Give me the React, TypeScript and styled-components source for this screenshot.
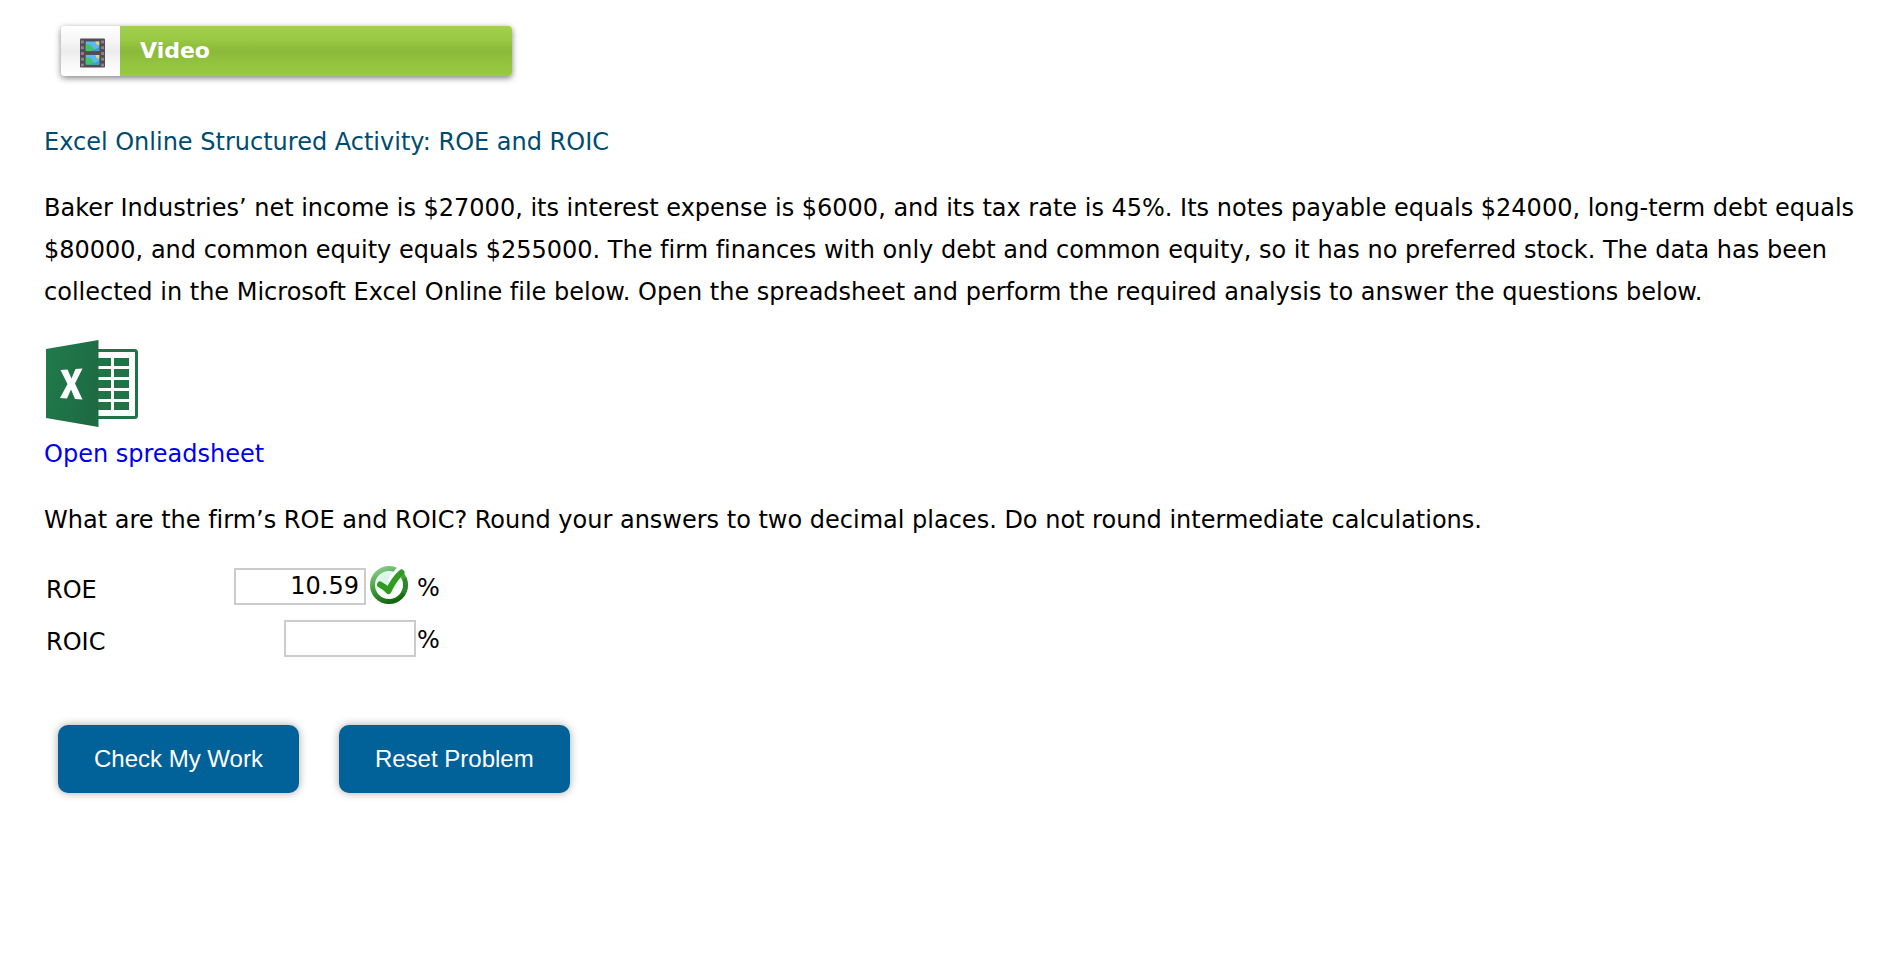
import React, { useState } from "react";
import styled, { createGlobalStyle } from "styled-components";

const GlobalStyle = createGlobalStyle`
  *, *::before, *::after { box-sizing: border-box; }
  body {
    margin: 0;
    background: #fff;
    color: #000;
    font-family: Verdana, "DejaVu Sans", sans-serif;
    font-size: 24px;
    line-height: 42px;
    font-variant-ligatures: none;
  }
`;

const Page = styled.main`
  padding: 26px 20px 40px 44px;
`;

const VideoLink = styled.a`
  display: flex;
  width: 451px;
  max-width: 100%;
  height: 50px;
  margin-left: 17px;
  border-radius: 4px;
  overflow: hidden;
  box-shadow: 0 2px 6px rgba(0, 0, 0, 0.5);
  color: #fff;
  text-decoration: none;
`;

const VideoIcon = styled.span`
  display: flex;
  align-items: center;
  justify-content: center;
  flex: 0 0 59px;
  padding: 4px 0 0 3px;
  background: linear-gradient(#fff 0%, #f6f6f6 30%, #ececec 50%, #f8f8f8 75%, #fff 100%);
`;

const VideoLabel = styled.span`
  flex: 1;
  padding-left: 20px;
  font-size: 22px;
  font-weight: bold;
  line-height: 50px;
  background: linear-gradient(#a3d04f 0%, #9aca45 25%, #8bb93a 50%, #93c43d 75%, #98cb40 100%);
`;

const Title = styled.h1`
  margin: 45px 0 24px;
  font-size: 24px;
  font-weight: normal;
  color: #004b70;
`;

const Text = styled.p`
  margin: 0 0 24px;
`;

const SheetLink = styled.a`
  display: inline-flex;
  flex-direction: column;
  gap: 6px;
  margin: 3px 0 24px;
  color: #00e;
  text-decoration: none;
`;

const ExcelIcon = styled.svg`
  display: block;
  margin-left: 2px;
`;

const Answers = styled.div`
  display: flex;
  flex-direction: column;
  width: 397px;
  gap: 10px;
  margin-left: 2px;
`;

const AnswerRow = styled.div`
  display: flex;
  align-items: center;
  height: 42px;
`;

const AnswerLabel = styled.label`
  flex: 1;
  padding-top: 8px;
`;

const AnswerInput = styled.input`
  width: 132px;
  height: 37px;
  padding: 0 5px;
  border: 2px solid #ccc;
  border-radius: 0;
  background: #fff;
  color: #000;
  font: inherit;
  line-height: 33px;
  text-align: right;
`;

const Mark = styled.svg`
  margin: 0 8px 3px 4px;
`;

const Unit = styled.span`
  width: 27px;
  padding: 4px 0 0 1px;
`;

const Actions = styled.div`
  display: flex;
  flex-wrap: wrap;
  gap: 40px;
  margin: 66px 0 0 14px;
`;

const ActionButton = styled.button`
  height: 68px;
  padding: 0 36px;
  border: 0;
  border-radius: 10px;
  background: #006298;
  box-shadow: 0 0 8px rgba(0, 0, 0, 0.35);
  color: #fff;
  font-family: Arial, "Liberation Sans", sans-serif;
  font-size: 24px;
  cursor: pointer;
`;

const perforations = [1, 7, 13, 19, 25];

function FilmStrip() {
  return (
    <svg width="25" height="30" viewBox="0 0 26 30" aria-hidden="true">
      <rect width="26" height="30" rx="1" fill="#504c52" />
      {[3, 17].map((y) => (
        <g key={y}>
          <rect x="6" y={y} width="14" height="10" fill="#5cb8ee" />
          <path d={`M6 ${y + 3}q5 -1 7 3t7 2v2H6z`} fill="#3fc565" />
          <path d={`M12 ${y + 10}l8 -4v4z`} fill="#3c9bdc" />
          <path d={`M16 ${y}h4v4q-3 0 -4 -4z`} fill="#f0d36a" />
        </g>
      ))}
      {perforations.map((y) => (
        <g key={y} fill="#8d8490">
          <rect x="1" y={y + 1} width="3" height="3" />
          <rect x="22" y={y + 1} width="3" height="3" />
        </g>
      ))}
    </svg>
  );
}

function Spreadsheet() {
  return (
    <ExcelIcon width="92" height="87" viewBox="0 0 92 87" aria-hidden="true">
      <defs>
        <linearGradient id="cover" x2="1" y2="0.4">
          <stop offset="0" stopColor="#207b4c" />
          <stop offset="1" stopColor="#1e6b43" />
        </linearGradient>
      </defs>
      <rect x="40" y="10.500" width="50.500" height="67" rx="2" fill="#fff" stroke="#207347" strokeWidth="3" />
      {[18, 29, 40, 51, 62].map((y) => (
        <g key={y} fill="#207347">
          <rect x="50" y={y} width="15" height="8" />
          <rect x="68" y={y} width="15" height="8" />
        </g>
      ))}
      <path d="M0 9L52.500 0V87L0 78z" fill="url(#cover)" />
      <path d="M14.500 30L21.500 29.500L25.500 38.500L29.500 29L36.500 28.500L29 43.500L36.500 59.500L29 59L25 49.500L21 58.500L14 58L21.500 44z" fill="#fff" />
    </ExcelIcon>
  );
}

function CorrectMark() {
  return (
    <Mark width="38" height="38" viewBox="0 0 38 38" role="img" aria-label="Correct">
      <defs>
        <linearGradient id="ring" x1="0.2" y1="0" x2="0.6" y2="1">
          <stop offset="0" stopColor="#86c987" />
          <stop offset="0.5" stopColor="#3f9d38" />
          <stop offset="1" stopColor="#13680f" />
        </linearGradient>
        <radialGradient id="glass" cx="0.4" cy="0.3" r="0.6">
          <stop offset="0" stopColor="#d5f3e4" />
          <stop offset="1" stopColor="#fff" />
        </radialGradient>
      </defs>
      <circle cx="19" cy="19" r="16.500" fill="url(#glass)" stroke="url(#ring)" strokeWidth="5" />
      <path d="M21 17L32 2" fill="none" stroke="#fff" strokeWidth="9" />
      <path d="M10 18.500q5 2.500 8.500 6.500Q24 13 31.500 6.500" fill="none" stroke="#329a22" strokeWidth="6" strokeLinecap="round" strokeLinejoin="round" />
      <path d="M34.500 13a16.500 16.500 0 0 1 -1 14" fill="none" stroke="#2c852c" strokeWidth="4" />
    </Mark>
  );
}

export default function App() {
  const [roe, setRoe] = useState("10.59");
  const [roic, setRoic] = useState("");

  return (
    <>
      <GlobalStyle />
      <Page>
        <VideoLink href="#video">
          <VideoIcon><FilmStrip /></VideoIcon>
          <VideoLabel>Video</VideoLabel>
        </VideoLink>
        <Title>Excel Online Structured Activity: ROE and ROIC</Title>
        <Text>
          Baker Industries’ net income is $27000, its interest expense is $6000, and its tax rate is 45%. Its notes
          payable equals $24000, long-term debt equals $80000, and common equity equals $255000. The firm finances with
          only debt and common equity, so it has no preferred stock. The data has been collected in the Microsoft Excel
          Online file below. Open the spreadsheet and perform the required analysis to answer the questions below.
        </Text>
        <SheetLink href="#spreadsheet">
          <Spreadsheet />
          Open spreadsheet
        </SheetLink>
        <Text>
          What are the firm’s ROE and ROIC? Round your answers to two decimal places. Do not round intermediate
          calculations.
        </Text>
        <Answers>
          <AnswerRow>
            <AnswerLabel htmlFor="roe">ROE</AnswerLabel>
            <AnswerInput id="roe" value={roe} onChange={(e) => setRoe(e.target.value)} />
            <CorrectMark />
            <Unit>%</Unit>
          </AnswerRow>
          <AnswerRow>
            <AnswerLabel htmlFor="roic">ROIC</AnswerLabel>
            <AnswerInput id="roic" value={roic} onChange={(e) => setRoic(e.target.value)} />
            <Unit>%</Unit>
          </AnswerRow>
        </Answers>
        <Actions>
          <ActionButton type="button">Check My Work</ActionButton>
          <ActionButton type="button">Reset Problem</ActionButton>
        </Actions>
      </Page>
    </>
  );
}
